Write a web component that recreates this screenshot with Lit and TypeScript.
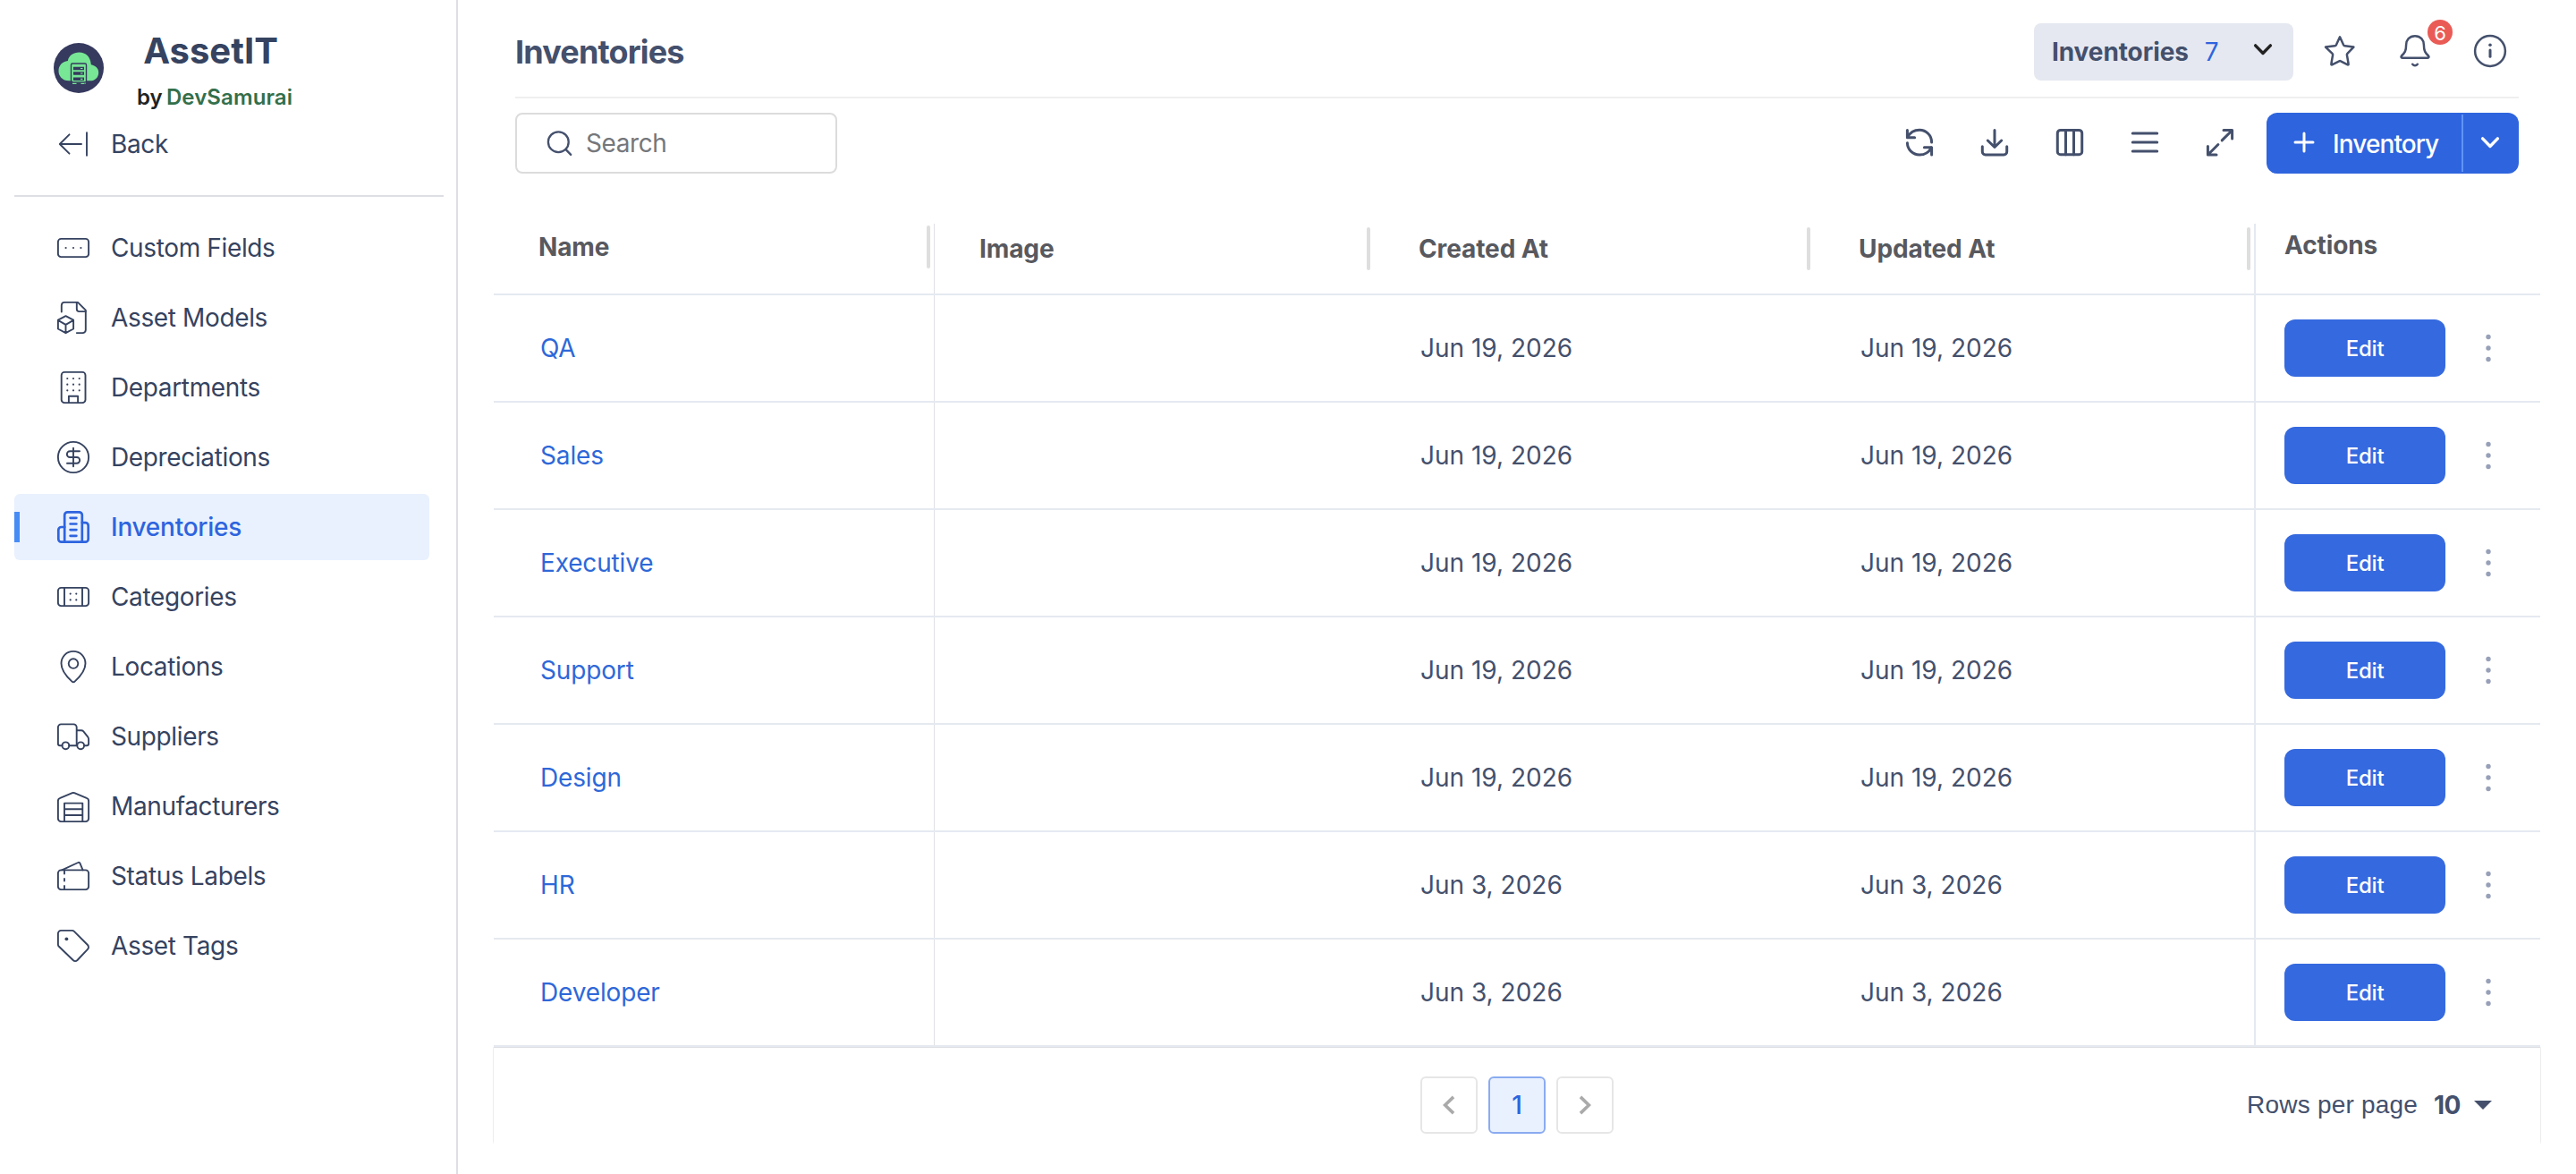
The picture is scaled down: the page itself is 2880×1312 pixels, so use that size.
// app.ts
// AssetIT admin: inventories list

import { LitElement, html, css, svg, type SVGTemplateResult } from 'lit';
import { customElement, property, state } from 'lit/decorators.js';
import { classMap } from 'lit/directives/class-map.js';

interface NavItem {
  icon: string;
  label: string;
}

interface Inventory {
  name: string;
  createdAt: string;
  updatedAt: string;
}

const NAV_ITEMS: NavItem[] = [
  { icon: 'fields', label: 'Custom Fields' },
  { icon: 'models', label: 'Asset Models' },
  { icon: 'departments', label: 'Departments' },
  { icon: 'depreciations', label: 'Depreciations' },
  { icon: 'inventories', label: 'Inventories' },
  { icon: 'categories', label: 'Categories' },
  { icon: 'locations', label: 'Locations' },
  { icon: 'suppliers', label: 'Suppliers' },
  { icon: 'manufacturers', label: 'Manufacturers' },
  { icon: 'status', label: 'Status Labels' },
  { icon: 'tags', label: 'Asset Tags' },
];

const INVENTORIES: Inventory[] = [
  { name: 'QA', createdAt: 'Jun 19, 2026', updatedAt: 'Jun 19, 2026' },
  { name: 'Sales', createdAt: 'Jun 19, 2026', updatedAt: 'Jun 19, 2026' },
  { name: 'Executive', createdAt: 'Jun 19, 2026', updatedAt: 'Jun 19, 2026' },
  { name: 'Support', createdAt: 'Jun 19, 2026', updatedAt: 'Jun 19, 2026' },
  { name: 'Design', createdAt: 'Jun 19, 2026', updatedAt: 'Jun 19, 2026' },
  { name: 'HR', createdAt: 'Jun 3, 2026', updatedAt: 'Jun 3, 2026' },
  { name: 'Developer', createdAt: 'Jun 3, 2026', updatedAt: 'Jun 3, 2026' },
];

const dot = (x: number, y: number, r = 1.1) =>
  svg`<circle class="solid" cx=${x} cy=${y} r=${r}></circle>`;

// All icons are drawn on a 36x36 grid
const ICONS: Record<string, SVGTemplateResult> = {
  back: svg`<path d="M27 18H3M13.5 7.3L2.8 18l10.7 10.7M33 5.3v25.4"/>`,
  fields: svg`<rect x=".9" y="7.9" width="34.2" height="20.2" rx="3.4"/>
    ${dot(9.6, 18)}${dot(18, 18)}${dot(26.4, 18)}`,
  models: svg`<path d="M4.8 11.6V4.2A3.4 3.4 0 0 1 8.2.9H23l8.8 8.8v22a3.4 3.4 0 0 1-3.4 3.4h-6.6"/>
    <path d="M21.8.9v7.4a2.8 2.8 0 0 0 2.8 2.8h7.2"/>
    <path d="M9.5 16.2l8.6 4.5v9.8l-8.6 4.7-8.6-4.7v-9.8zM.9 20.9l8.6 5 8.6-5M9.5 25.9v9.2"/>`,
  departments: svg`<rect x="4.7" y=".9" width="26.8" height="34.2" rx="3.4"/>
    <path d="M12.9 35v-7.3h10.2V35"/>
    ${[8, 14.7, 21.3].map(y => [11.3, 18, 24.7].map(x => dot(x, y)))}`,
  depreciations: svg`<circle cx="18" cy="18" r="17.1"/>
    <path d="M25 11.3H14.2a3.3 3.3 0 0 0 0 6.7h7.6a3.3 3.3 0 0 1 0 6.7H11M18 7.7v20.6"/>`,
  inventories: svg`<path d="M8.2 34.7V4.6a3.3 3.3 0 0 1 3.3-3.3h13a3.3 3.3 0 0 1 3.3 3.3v30.1"/>
    <path d="M8.2 18H4.6a3.3 3.3 0 0 0-3.3 3.3v10.1a3.3 3.3 0 0 0 3.3 3.3h26.8a3.3 3.3 0 0 0 3.3-3.3V16.4a3.3 3.3 0 0 0-3.3-3.3h-3.6"/>
    <path d="M14.6 7.8h6.8M14.6 14.5h6.8M14.6 21.1h6.8M14.6 27.8h6.8"/>`,
  categories: svg`<rect x=".9" y="7.9" width="34.2" height="20.2" rx="3.4"/>
    <path d="M8 8v20M28 8v20"/>
    ${dot(14.7, 14.6)}${dot(21.3, 14.6)}${dot(14.7, 21.4)}${dot(21.3, 21.4)}`,
  locations: svg`<path d="M18 .9c7.7 0 13.5 5.9 13.5 13.7 0 7.6-6.2 14.8-11.7 19.8a2.6 2.6 0 0 1-3.6 0C10.7 29.4 4.5 22.2 4.5 14.6 4.5 6.8 10.3.9 18 .9z"/>
    <circle cx="18" cy="14.6" r="5.3"/>`,
  suppliers: svg`<path d="M5.6 28.3H3.2a2.3 2.3 0 0 1-2.3-2.3V7.8a3.4 3.4 0 0 1 3.4-3.4h14a3.4 3.4 0 0 1 3.4 3.4v20.5H13.2M21.7 11.2h5.1a3 3 0 0 1 2.3 1l5 6.2a4.6 4.6 0 0 1 1 2.9v4.7a2.3 2.3 0 0 1-2.3 2.3h-2.700"/>
    <circle cx="9.4" cy="28.3" r="3.9"/><circle cx="26.2" cy="28.3" r="3.9"/>`,
  manufacturers: svg`<path d="M.9 12.1a3.4 3.4 0 0 1 2.3-3.2L16.9 3.2a2.8 2.8 0 0 1 2.2 0l13.7 5.7a3.4 3.4 0 0 1 2.3 3.2v19.6a3.4 3.4 0 0 1-3.4 3.4H4.3a3.4 3.4 0 0 1-3.4-3.4z"/>
    <path d="M8 35V14.6h20.3V35M8 21.3h20.3M8 28h20.3"/>`,
  status: svg`<rect x=".9" y="11.4" width="34.2" height="21.7" rx="3.4"/>
    <path d="M5.2 11.3L23.2 3a1.7 1.7 0 0 1 2.3.8l3.1 7.5M8 12v3.600M8 21v2.500M8 29v4"/>`,
  tags: svg`<path d="M4.3.9h12.2c1 0 1.700.3 2.4 1L34 17a3.4 3.4 0 0 1 0 4.8L22.5 34a3.4 3.4 0 0 1-4.8 0L1.9 18.8a3.4 3.4 0 0 1-1-2.4V4.3A3.4 3.4 0 0 1 4.3.9z"/>
    ${dot(10.4, 10.3, 1.9)}`,
  search: svg`<circle cx="16.3" cy="16.7" r="11.4"/><path d="M24.4 24.9l5.8 6"/>`,
  star: svg`<path d="M18 2.3l4.1 8.9c.3.6.8 1 1.5 1.1l9.8 1.3-7 7.2c-.4.4-.6 1-.5 1.6l1.8 10.3c.1.5-.4.9-.9.7l-7.9-4.1a1.7 1.7 0 0 0-1.6 0L9.2 33.4c-.5.2-1-.2-.9-.7l1.8-10.3c.1-.6-.1-1.2-.5-1.6L2 13.6l10.4-1.3c.7-.1 1.2-.5 1.5-1.1z"/>`,
  bell: svg`<path d="M18 1.2c6.3 0 9.9 4.6 9.9 10 0 7 1.6 8.7 5.2 12.3.7.8.6 2.3-1 2.3H3.9c-1.6 0-1.7-1.5-1-2.3 3.6-3.6 5.2-5.3 5.2-12.3 0-5.4 3.6-10 9.9-10z"/>
    <path d="M15.2 32.8c1.6 2 4 2 5.6 0"/>`,
  info: svg`<circle cx="18" cy="18" r="16.9"/><path d="M18 17v7.2" stroke-width="3"/>${dot(18, 11.3, 1.8)}`,
  refresh: svg`<path d="M4.4 4.5v8.2h8.2M31.6 32v-8.2h-8.2"/>
    <path d="M4.8 12.3C7.2 7.5 12.2 4.3 18 4.3c7.5 0 13.6 6 13.6 13.6M31.2 24.1c-2.4 4.600-7.4 7.900-13.2 7.900-7.500 0-13.400-5.800-13.600-13.300"/>`,
  download: svg`<path d="M18 4.5v18.7M10.3 16l7.7 7.5 7.7-7.5M4.3 22.7v5.9a3.4 3.4 0 0 0 3.4 3.4h20.6a3.4 3.4 0 0 0 3.4-3.4v-5.9"/>`,
  columns: svg`<rect x="4.3" y="4.4" width="27.4" height="27.4" rx="3.4"/><path d="M13.5 4.4v27.4M22.5 4.4v27.4"/>`,
  menu: svg`<path d="M4.3 8h27.4M4.3 18h27.4M4.3 28h27.4"/>`,
  expand: svg`<path d="M22 4.5h9.6V14M31.4 4.7L20.2 15.9M4.4 22.5V32H14M4.7 31.7l11.2-11.2"/>`,
  plus: svg`<path d="M18 8v20M8 18h20"/>`,
  down: svg`<path d="M9.6 13.9l8.4 8.6 8.4-8.6"/>`,
  prev: svg`<path d="M23 8.9L13.6 18l9.4 9.1" stroke-linecap="butt" stroke-linejoin="miter"/>`,
  next: svg`<path d="M13 8.9l9.4 9.1-9.4 9.1" stroke-linecap="butt" stroke-linejoin="miter"/>`,
  more: svg`${dot(18, 5.5, 2.7)}${dot(18, 18, 2.7)}${dot(18, 30.5, 2.7)}`,
  caret: svg`<path class="solid" d="M8 13h20L18 23z"/>`,
};

@customElement('app-icon')
export class AppIcon extends LitElement {
  static styles = css`
    :host {
      display: block;
      flex: none;
      width: 36px;
      height: 36px;
    }

    svg {
      display: block;
      width: 100%;
      height: 100%;
      overflow: visible;
      fill: none;
      stroke: currentColor;
      stroke-width: var(--icon-stroke, 1.9);
      stroke-linecap: round;
      stroke-linejoin: round;
    }

    .solid {
      fill: currentColor;
      stroke: none;
    }
  `;

  @property({ type: String }) name = '';

  render() {
    return html`<svg viewBox="0 0 36 36" aria-hidden="true">${ICONS[this.name]}</svg>`;
  }
}

@customElement('app-sidebar')
export class AppSidebar extends LitElement {
  static styles = css`
    :host {
      display: block;
      box-sizing: border-box;
      border-right: 2px solid #dedfe5;
      color: #364360;
    }

    .brand {
      display: flex;
      height: 124px;
      padding: 32px 0 0 60px;
      box-sizing: border-box;
    }

    .logo {
      width: 56px;
      height: 56px;
      margin-top: 16px;
    }

    .names {
      width: 248px;
      text-align: center;
    }

    .title {
      font-size: 40px;
      line-height: 50px;
      font-weight: 700;
      padding-right: 9px;
    }

    .vendor {
      margin-top: 12px;
      font-size: 24px;
      line-height: 30px;
      font-weight: 600;
      color: #222;
      letter-spacing: 0.1px;
      white-space: nowrap;
    }

    .vendor b {
      font-weight: 600;
      color: #336f4c;
      margin-left: -2px;
    }

    .item {
      display: flex;
      align-items: center;
      height: 74px;
      margin: 0 30px 4px 16px;
      padding-left: 48px;
      gap: 24px;
      border-radius: 6px;
      font-size: 28px;
      letter-spacing: -0.36px;
      box-sizing: border-box;
    }

    .back {
      margin-bottom: 20px;
    }

    .divider {
      height: 2px;
      margin: 0 14px 20px 16px;
      background: #dedfe5;
    }

    .active {
      padding-left: 0;
      background: #e9f1fe;
      color: #2e64de;
      font-weight: 500;
      letter-spacing: -0.25px;
      --icon-stroke: 2.7;
    }

    .active::before {
      content: '';
      width: 6px;
      height: 34px;
      margin-right: 18px;
      background: #478cf5;
    }
  `;

  @property({ type: String }) active = '';

  render() {
    return html`
      <div class="brand">
        <svg class="logo" viewBox="0 0 56 56">
          <circle cx="28" cy="28" r="28" fill="#363a5e"></circle>
          <path
            fill="#77e695"
            d="M17 42.3C9.8 42.3 5.5 37 5.5 31.2c0-6 4.3-10.6 10.3-11.2C17 14 22 10.5 28.5 10.5c7.5 0 12.7 5 13.3 13.7 5 1 8.4 4.2 8.4 8.7 0 5.5-4 9.4-9.2 9.4z"
          ></path>
          <path fill="#77e695" d="M21 42h15v3.5H34V46h-3.5v-1.5h-5V46H21z"></path>
          <rect x="19.5" y="23" width="17" height="21" rx="1.5" fill="none" stroke="#363a5e" stroke-width="1.4"></rect>
          <path stroke="#363a5e" stroke-width="3.4" d="M22 28.5h12M22 34h12M22 40.3h12"></path>
          <path stroke="#77e695" stroke-width="1.2" d="M30 28.5h2.5M30 34h2.5M30 40.3h2.5"></path>
        </svg>
        <div class="names">
          <div class="title">AssetIT</div>
          <div class="vendor">by <b>DevSamurai</b></div>
        </div>
      </div>
      <div class="item back"><app-icon name="back"></app-icon>Back</div>
      <div class="divider"></div>
      <nav>
        ${NAV_ITEMS.map(item => html`
          <div class=${classMap({ item: true, active: item.label === this.active })}>
            <app-icon name=${item.icon}></app-icon>${item.label}
          </div>
        `)}
      </nav>
    `;
  }
}

@customElement('inventory-table')
export class InventoryTable extends LitElement {
  static styles = css`
    :host {
      display: block;
      color: #44506c;
    }

    .row {
      display: grid;
      grid-template-columns: 493px 491px 492px 492px 1fr;
      height: 120px;
      box-sizing: border-box;
      border-bottom: 2px solid #e5e9f0;
      font-size: 28px;
    }

    .head {
      height: 80px;
      font-weight: 700;
      letter-spacing: -0.1px;
      color: #58595f;
    }

    .cell {
      display: flex;
      align-items: center;
      padding-left: 52px;
    }

    .name {
      border-right: 1px solid #dfe1e5;
      color: #2e68d8;
      letter-spacing: -0.15px;
    }

    .actions {
      padding-left: 32px;
      border-left: 2px solid #e5e9f0;
    }

    .head .cell {
      align-items: flex-start;
      justify-content: space-between;
      padding: 4px 4px 0 50px;
      line-height: 48px;
    }

    .head .name {
      padding-top: 2px;
      color: inherit;
    }

    .head .actions {
      padding: 0 0 0 32px;
    }

    .resizer {
      width: 4px;
      height: 48px;
      border-radius: 2px;
      background: #dedede;
    }

    .edit {
      width: 180px;
      height: 64px;
      border: none;
      border-radius: 12px;
      background: #3569df;
      color: #fff;
      font: 500 24px/30px Inter, sans-serif;
      letter-spacing: -0.2px;
      padding: 2px 0 0;
    }

    .more {
      width: 36px;
      margin-left: 30px;
      color: #97a0b8;
    }

    .footer {
      display: grid;
      grid-template-columns: 1fr auto 1fr;
      align-items: center;
      height: 108px;
      padding: 21px 0 0;
      box-sizing: border-box;
      border-top: 1px solid #dcdfe2;
      box-shadow: 0 0 4px rgba(0, 0, 0, 0.18);
      clip-path: inset(0 -1px 0 -1px);
    }

    .pages {
      grid-column: 2;
      display: flex;
      gap: 12px;
    }

    .page {
      display: flex;
      align-items: center;
      justify-content: center;
      width: 64px;
      height: 64px;
      box-sizing: border-box;
      border: 2px solid #e6e6e6;
      border-radius: 6px;
      font-size: 28px;
      font-weight: 500;
      color: #aaa;
      --icon-stroke: 3.6;
    }

    .current {
      border-color: #8aabf0;
      background: #e9f1fe;
      color: #2e64de;
    }

    .page-size {
      display: flex;
      align-items: center;
      justify-content: flex-end;
      padding-right: 46px;
      font: 28px/34px 'Liberation Sans', sans-serif;
      letter-spacing: 0.2px;
    }

    .page-size b {
      margin: 0 7px 0 18px;
      font: 700 28px/32px Inter, sans-serif;
      letter-spacing: -0.5px;
    }
  `;

  @property({ attribute: false }) rows: Inventory[] = [];

  render() {
    return html`
      <div class="row head">
        <div class="cell name">Name<span class="resizer"></span></div>
        ${['Image', 'Created At', 'Updated At'].map(label => html`
          <div class="cell">${label}<span class="resizer"></span></div>
        `)}
        <div class="cell actions">Actions</div>
      </div>
      ${this.rows.map(row => html`
        <div class="row">
          <div class="cell name">${row.name}</div>
          <div class="cell"></div>
          <div class="cell">${row.createdAt}</div>
          <div class="cell">${row.updatedAt}</div>
          <div class="cell actions">
            <button class="edit">Edit</button>
            <app-icon class="more" name="more"></app-icon>
          </div>
        </div>
      `)}
      <div class="footer">
        <div class="pages">
          <span class="page"><app-icon name="prev"></app-icon></span>
          <span class="page current">1</span>
          <span class="page"><app-icon name="next"></app-icon></span>
        </div>
        <div class="page-size">Rows per page <b>10</b><app-icon name="caret"></app-icon></div>
      </div>
    `;
  }
}

@customElement('app-root')
export class AppRoot extends LitElement {
  static styles = css`
    :host {
      display: grid;
      grid-template-columns: 512px 1fr;
      height: 1312px;
      overflow: hidden;
      background: #fff;
      color: #44506c;
      font-family: Inter, sans-serif;
    }

    .topbar {
      display: flex;
      align-items: center;
      height: 110px;
      margin: 0 64px;
      padding-top: 8px;
      box-sizing: border-box;
      border-bottom: 2px solid #efeff0;
    }

    h1 {
      margin: 0 auto 0 0;
      font-size: 36px;
      line-height: 44px;
      font-weight: 700;
      letter-spacing: -0.85px;
    }

    .picker {
      display: flex;
      align-items: center;
      width: 290px;
      height: 64px;
      margin-right: 34px;
      padding: 0 16px 0 20px;
      box-sizing: border-box;
      border-radius: 8px;
      background: #e5e8f0;
      font-size: 28px;
      font-weight: 700;
      letter-spacing: -0.1px;
    }

    .count {
      margin: 0 auto 0 18px;
      font-weight: 400;
      color: #2e64de;
    }

    .chevron {
      color: #222;
      margin-top: -6px;
      --icon-stroke: 3.4;
    }

    .links {
      display: flex;
      gap: 48px;
      margin: -2px 14px 0 0;
      --icon-stroke: 2.5;
    }

    .bell {
      position: relative;
    }

    .badge {
      position: absolute;
      left: 32px;
      top: -17px;
      width: 28px;
      height: 28px;
      border-radius: 50%;
      background: #ea5b55;
      color: #fff;
      font-size: 22px;
      line-height: 30px;
      text-align: center;
    }

    .toolbar {
      display: flex;
      align-items: center;
      height: 68px;
      margin: 16px 64px 0;
    }

    .search {
      display: flex;
      align-items: center;
      width: 360px;
      height: 68px;
      margin-right: auto;
      padding-left: 30px;
      gap: 11px;
      box-sizing: border-box;
      border: 2px solid #dcdcdc;
      border-radius: 8px;
      font-size: 28px;
      letter-spacing: -0.4px;
      color: #75777b;
      --icon-stroke: 2.3;
    }

    .search app-icon {
      color: #44506c;
    }

    .tools {
      display: flex;
      gap: 48px;
      margin: -2px 34px 0 0;
      --icon-stroke: 3;
    }

    .create {
      display: flex;
      align-items: center;
      width: 282px;
      height: 68px;
      box-sizing: border-box;
      border-radius: 12px;
      background: #2e64de;
      color: #fff;
      font-size: 28px;
      font-weight: 500;
      letter-spacing: -0.9px;
      --icon-stroke: 3;
    }

    .create .add {
      margin: -2px 14px 0 24px;
    }

    .create .label {
      padding-top: 2px;
    }

    .create .split {
      width: 2px;
      height: 64px;
      margin: 0 12px 0 auto;
      background: #5f93f7;
    }

    .create .open {
      margin: -2px 14px 0 0;
      --icon-stroke: 3.4;
    }

    inventory-table {
      margin: 56px 40px 0;
    }
  `;

  @state() private rows = INVENTORIES;

  render() {
    return html`
      <app-sidebar active="Inventories"></app-sidebar>
      <main>
        <header class="topbar">
          <h1>Inventories</h1>
          <div class="picker">
            Inventories<span class="count">${this.rows.length}</span>
            <app-icon class="chevron" name="down"></app-icon>
          </div>
          <div class="links">
            <app-icon name="star"></app-icon>
            <div class="bell"><app-icon name="bell"></app-icon><span class="badge">6</span></div>
            <app-icon name="info"></app-icon>
          </div>
        </header>
        <div class="toolbar">
          <div class="search"><app-icon name="search"></app-icon>Search</div>
          <div class="tools">
            ${['refresh', 'download', 'columns', 'menu', 'expand'].map(
              name => html`<app-icon name=${name}></app-icon>`
            )}
          </div>
          <div class="create">
            <app-icon class="add" name="plus"></app-icon>
            <span class="label">Inventory</span>
            <span class="split"></span>
            <app-icon class="open" name="down"></app-icon>
          </div>
        </div>
        <inventory-table .rows=${this.rows}></inventory-table>
      </main>
    `;
  }
}

declare global {
  interface HTMLElementTagNameMap {
    'app-root': AppRoot;
    'app-icon': AppIcon;
    'app-sidebar': AppSidebar;
    'inventory-table': InventoryTable;
  }
}
